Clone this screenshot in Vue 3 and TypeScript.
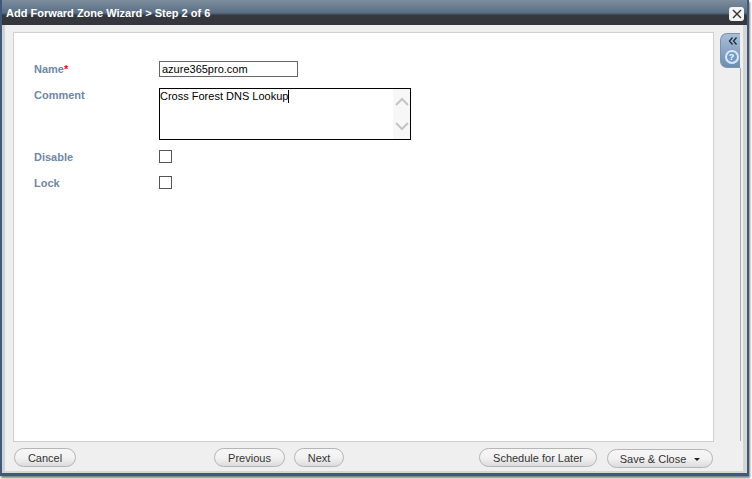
<script setup lang="ts">
const fields = [
  { label: 'Disable' },
  { label: 'Lock' },
]
</script>

<template>
  <div class="page">
    <div class="window">
      <div class="titlebar">
        <span class="title">Add Forward Zone Wizard &gt; Step 2 of 6</span>
        <button class="close" aria-label="Close">
          <svg viewBox="0 0 10 10" width="10" height="10">
            <path d="M1 1 L9 9 M9 1 L1 9" stroke="#333" stroke-width="1.4" fill="none" />
          </svg>
        </button>
      </div>
      <div class="body">
        <div class="main">
          <div class="content">
            <div class="row row-name">
              <label class="label">Name<span class="req">*</span></label>
              <input class="text" value="azure365pro.com" />
            </div>
            <div class="row row-comment">
              <label class="label">Comment</label>
              <div class="area">
                <span class="area-text">Cross Forest DNS Lookup</span><span class="caret"></span>
                <div class="scroll">
                  <svg viewBox="0 0 14 10" width="14" height="10">
                    <path d="M1 8 L7 2 L13 8" stroke="#c4c4c4" stroke-width="2" fill="none" />
                  </svg>
                  <svg viewBox="0 0 14 10" width="14" height="10">
                    <path d="M1 2 L7 8 L13 2" stroke="#c4c4c4" stroke-width="2" fill="none" />
                  </svg>
                </div>
              </div>
            </div>
            <div v-for="f in fields" :key="f.label" class="row row-check">
              <label class="label">{{ f.label }}</label>
              <span class="check"></span>
            </div>
          </div>
          <div class="footer">
            <button class="btn btn-cancel">Cancel</button>
            <div class="nav">
              <button class="btn btn-prev">Previous</button>
              <button class="btn btn-next">Next</button>
            </div>
            <div class="actions">
              <button class="btn btn-later">Schedule for Later</button>
              <button class="btn btn-save">Save &amp; Close<span class="arrow"></span></button>
            </div>
          </div>
        </div>
        <div class="side">
          <div class="tab">
            <svg class="collapse" viewBox="0 0 10 10" width="10" height="10">
              <path d="M4.5 1.5 L1.5 5 L4.5 8.5 M8.5 1.5 L5.5 5 L8.5 8.5" stroke="#1d2a3a" stroke-width="1.3" fill="none" />
            </svg>
            <span class="help">?</span>
          </div>
          <div class="rail"></div>
        </div>
      </div>
    </div>
  </div>
</template>

<style>
html, body { margin: 0; background: #fff; }
</style>

<style scoped>
.page {
  width: 752px;
  height: 479px;
  overflow: hidden;
  font-family: "Liberation Sans", Arial, sans-serif;
  background: #fff;
}
.window {
  width: 749px;
  height: 476px;
  display: flex;
  flex-direction: column;
  box-sizing: border-box;
  background: #3f5a78;
  padding: 0 2px 3px 2px;
  box-shadow: 1px 2px 2px rgba(0, 0, 0, 0.5);
}
.titlebar {
  height: 25px;
  flex: none;
  display: flex;
  align-items: center;
  justify-content: space-between;
  padding: 0 3px 0 4px;
  background: linear-gradient(#7d8d9d 0, #5a7087 50%, #35393f 62%, #33373d 100%);
}
.title {
  color: #fff;
  font-size: 11px;
  font-weight: bold;
}
.close {
  width: 15px;
  height: 14px;
  margin-top: 3px;
  padding: 0;
  border: 0;
  border-radius: 3px;
  background: #f4f4f4;
  display: flex;
  align-items: center;
  justify-content: center;
}
.body {
  flex: 1;
  display: flex;
  background: #efefef;
  padding: 7px 0 0 8px;
  border-left: 3px solid #cdd3d9;
  border-right: 4px solid #d5d5d5;
  border-bottom: 2px solid #d5d5d5;
  min-height: 0;
}
.main {
  width: 701px;
  flex: none;
  display: flex;
  flex-direction: column;
}
.content {
  flex: 1;
  background: #fff;
  border: 1px solid #cfcfcf;
  padding: 28px 0 0 20px;
}
.row {
  display: flex;
  align-items: flex-start;
}
.label {
  width: 125px;
  flex: none;
  color: #6f87a6;
  font-size: 11px;
  font-weight: bold;
}
.req { color: #d11; }
.row-name { height: 27px; }
.row-name .label { padding-top: 2px; }
.text {
  width: 139px;
  height: 16px;
  box-sizing: border-box;
  border: 1px solid #666;
  padding: 0 2px;
  margin: 0;
  font: 11px "Liberation Sans", Arial, sans-serif;
  color: #000;
  outline: none;
}
.row-comment { height: 62px; }
.row-comment .label { padding-top: 1px; }
.area {
  position: relative;
  width: 252px;
  height: 52px;
  box-sizing: border-box;
  border: 1px solid #000;
  font-size: 11px;
  line-height: 14px;
  color: #000;
}
.caret {
  display: inline-block;
  width: 1px;
  height: 13px;
  background: #000;
  vertical-align: top;
  margin-top: 1px;
}
.scroll {
  position: absolute;
  top: 0;
  right: 0;
  bottom: 0;
  width: 17px;
  background: #f7f7f7;
  display: flex;
  flex-direction: column;
  align-items: center;
  justify-content: space-between;
  padding: 8px 0 8px;
  box-sizing: border-box;
}
.row-check { height: 26px; }
.row-check .label { padding-top: 1px; }
.check {
  width: 13px;
  height: 13px;
  box-sizing: border-box;
  border: 1px solid #555;
  background: #fff;
}
.footer {
  height: 29px;
  flex: none;
  display: flex;
  align-items: flex-start;
  padding-top: 6px;
  box-sizing: border-box;
}
.btn {
  height: 19px;
  padding: 0;
  box-sizing: border-box;
  border: 1px solid #b5b5b5;
  border-radius: 10px;
  background: linear-gradient(#f6f6f6 0, #f2f2f2 50%, #dcdcdc 100%);
  color: #333;
  font: 11px "Liberation Sans", Arial, sans-serif;
}
.btn-cancel { width: 62px; margin-left: 1px; }
.nav { display: flex; gap: 9px; margin-left: 138px; }
.btn-prev { width: 71px; }
.btn-next { width: 50px; }
.actions { display: flex; gap: 10px; margin-left: 135px; }
.btn-later { width: 118px; }
.btn-save { width: 106px; margin-top: 1px; }
.arrow {
  display: inline-block;
  width: 0;
  height: 0;
  margin-left: 8px;
  vertical-align: middle;
  border-left: 3px solid transparent;
  border-right: 3px solid transparent;
  border-top: 3px solid #222;
}
.side {
  flex: 1;
  display: flex;
  flex-direction: column;
  padding: 0 0 0 6px;
}
.tab {
  width: 20px;
  height: 35px;
  flex: none;
  box-sizing: border-box;
  margin-top: 1px;
  border: 1px solid #7d93ad;
  border-right: 0;
  border-radius: 7px 0 0 7px;
  background: linear-gradient(#a9bfd8, #6c8cb1);
  display: flex;
  flex-direction: column;
  align-items: center;
  gap: 4px;
  padding: 2px 0 0 2px;
}
.collapse { margin-left: 2px; }
.help {
  width: 14px;
  height: 14px;
  box-sizing: border-box;
  border-radius: 50%;
  background: #6f9bd0;
  border: 2px solid #dce8f5;
  color: #fff;
  font-size: 9px;
  font-weight: bold;
  line-height: 10px;
  text-align: center;
}
.rail {
  width: 1px;
  height: 373px;
  margin-left: 20px;
  background: #aaa;
}
</style>
